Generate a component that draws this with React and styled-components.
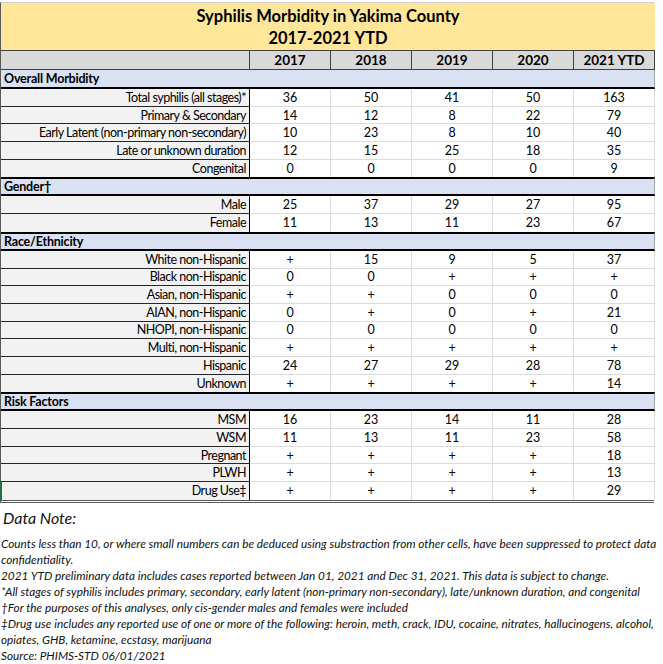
import React from 'react';
import styled, { createGlobalStyle } from 'styled-components';

const GlobalStyle = createGlobalStyle`
  html, body {
    margin: 0;
    padding: 0;
    background: #fff;
  }
  body {
    font-family: Lato, 'Open Sans', sans-serif;
    color: #000;
  }
`;

const sections = [
  {
    title: 'Overall Morbidity',
    rows: [
      ['Total syphilis (all stages)*', '36', '50', '41', '50', '163'],
      ['Primary & Secondary', '14', '12', '8', '22', '79'],
      ['Early Latent (non-primary non-secondary)', '10', '23', '8', '10', '40'],
      ['Late or unknown duration', '12', '15', '25', '18', '35'],
      ['Congenital', '0', '0', '0', '0', '9'],
    ],
  },
  {
    title: 'Gender\u2020',
    rows: [
      ['Male', '25', '37', '29', '27', '95'],
      ['Female', '11', '13', '11', '23', '67'],
    ],
  },
  {
    title: 'Race/Ethnicity',
    rows: [
      ['White non-Hispanic', '+', '15', '9', '5', '37'],
      ['Black non-Hispanic', '0', '0', '+', '+', '+'],
      ['Asian, non-Hispanic', '+', '+', '0', '0', '0'],
      ['AIAN, non-Hispanic', '0', '+', '0', '+', '21'],
      ['NHOPI, non-Hispanic', '0', '0', '0', '0', '0'],
      ['Multi, non-Hispanic', '+', '+', '+', '+', '+'],
      ['Hispanic', '24', '27', '29', '28', '78'],
      ['Unknown', '+', '+', '+', '+', '14'],
    ],
  },
  {
    title: 'Risk Factors',
    rows: [
      ['MSM', '16', '23', '14', '11', '28'],
      ['WSM', '11', '13', '11', '23', '58'],
      ['Pregnant', '+', '+', '+', '+', '18'],
      ['PLWH', '+', '+', '+', '+', '13'],
      ['Drug Use\u2021', '+', '+', '+', '+', '29'],
    ],
  },
];

const years = ['2017', '2018', '2019', '2020', '2021 YTD'];

const notes = [
  'Counts less than 10, or where small numbers can be deduced using substraction from other cells, have been suppressed to protect data',
  'confidentiality.',
  '2021 YTD preliminary data includes cases reported between Jan 01, 2021 and Dec 31, 2021. This data is subject to change.',
  '*All stages of syphilis includes primary, secondary, early latent (non-primary  non-secondary), late/unknown duration, and congenital',
  '\u2020For the purposes of this analyses, only cis-gender males and females were included',
  '\u2021Drug use includes any reported use of one or more of the following: heroin, meth, crack, IDU, cocaine, nitrates, hallucinogens, alcohol,',
  'opiates, GHB, ketamine, ecstasy, marijuana',
  'Source: PHIMS-STD 06/01/2021',
];

const Page = styled.div`
  width: 663px;
  padding-top: 2px;
`;

const Sheet = styled.div`
  display: grid;
  grid-template-columns: 249px repeat(5, 81px);
  width: 654px;
  border-left: 1px solid #595959;
  border-top: 1px solid #d0d0d0;
  box-sizing: border-box;
  border-bottom: 3px double #595959;
`;

const TitleCell = styled.div`
  grid-column: 1 / -1;
  height: 48px;
  background: #ffe699;
  border-bottom: 1px solid #404040;
  box-sizing: border-box;
  display: flex;
  flex-direction: column;
  align-items: center;
  justify-content: center;
  font-weight: 700;
  font-size: 16.5px;
  line-height: 22px;
  color: #000;
`;

const HeaderCell = styled.div`
  height: 19px;
  box-sizing: border-box;
  background: #d9d9d9;
  border-right: 1px solid #404040;
  border-bottom: 1px solid #404040;
  display: flex;
  align-items: center;
  justify-content: center;
  font-weight: 700;
  font-size: 13.5px;
  color: #000;
`;

const SectionCell = styled.div`
  grid-column: 1 / -1;
  height: 19px;
  box-sizing: border-box;
  background: #d9e1f2;
  border-top: ${(p) => (p.$first ? 'none' : '2px solid #000')};
  border-bottom: 2px solid #000;
  border-right: 1px solid #a6a6a6;
  display: flex;
  align-items: center;
  padding-left: 3px;
  font-weight: 700;
  font-size: 12.5px;
  letter-spacing: -0.2px;
`;

const LabelCell = styled.div`
  height: 17.7px;
  box-sizing: border-box;
  background: #f2f2f2;
  border-bottom: ${(p) => (p.$last ? 'none' : '1px solid #262626')};
  border-right: 1.5px solid #000;
  border-left: ${(p) => (p.$marked ? '2px solid #217346' : 'none')};
  margin-left: ${(p) => (p.$marked ? '-1px' : '0')};
  display: flex;
  align-items: center;
  justify-content: flex-end;
  padding-right: 3px;
  font-size: 12.5px;
  letter-spacing: -0.5px;
  white-space: nowrap;
  color: #000;
`;

const ValueCell = styled.div`
  height: 17.7px;
  box-sizing: border-box;
  background: #fff;
  border-bottom: ${(p) => (p.$last ? 'none' : '1px solid #dcdcdc')};
  border-right: 1px solid #dcdcdc;
  display: flex;
  align-items: center;
  justify-content: center;
  font-size: 12.5px;
  color: #000;
`;

const NoteBlock = styled.div`
  padding-left: 1px;
  font-style: italic;
  color: #111;
`;

const NoteHeading = styled.div`
  font-size: 16px;
  line-height: 24px;
  margin-top: 3px;
  margin-bottom: 6px;
  padding-left: 2px;
`;

const NoteLine = styled.div`
  font-size: 11.8px;
  line-height: 16px;
  white-space: nowrap;
`;

const App = () => {
  return (
    <Page>
      <GlobalStyle />
      <Sheet>
        <TitleCell>
          <div>Syphilis Morbidity in Yakima County</div>
          <div>2017-2021 YTD</div>
        </TitleCell>
        <HeaderCell />
        {years.map((y) => (
          <HeaderCell key={y}>{y}</HeaderCell>
        ))}
        {sections.map((section, si) => (
          <React.Fragment key={section.title}>
            <SectionCell $first={si === 0}>{section.title}</SectionCell>
            {section.rows.map((row, ri) => {
              const last = ri === section.rows.length - 1;
              const finalRow = si === sections.length - 1 && last;
              return (
                <React.Fragment key={row[0]}>
                  <LabelCell $last={last} $marked={finalRow}>
                    {row[0]}
                  </LabelCell>
                  {row.slice(1).map((v, vi) => (
                    <ValueCell key={vi} $last={last}>
                      {v}
                    </ValueCell>
                  ))}
                </React.Fragment>
              );
            })}
          </React.Fragment>
        ))}
      </Sheet>
      <NoteBlock>
        <NoteHeading>Data Note:</NoteHeading>
        {notes.map((n) => (
          <NoteLine key={n}>{n}</NoteLine>
        ))}
      </NoteBlock>
    </Page>
  );
};

export default App;
